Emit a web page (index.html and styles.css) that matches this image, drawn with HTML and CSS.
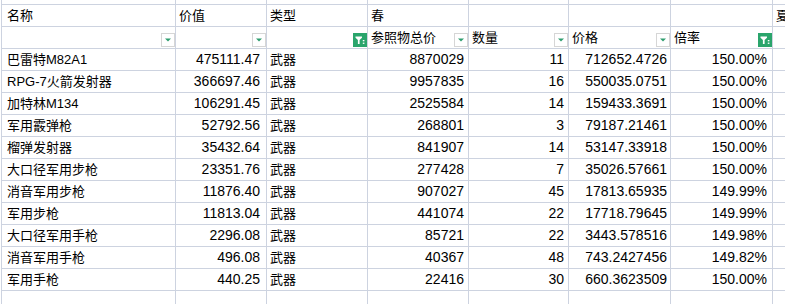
FILE: index.html
```html
<!DOCTYPE html>
<html lang="zh-CN">
<head>
<meta charset="utf-8">
<title>武器价格表</title>
<link rel="stylesheet" href="styles.css">
</head>
<body>
<div class="sheet" role="grid">
  <div class="row row-top" role="row">
    <div class="cell"></div><div class="cell"></div><div class="cell"></div><div class="cell"></div><div class="cell"></div><div class="cell"></div><div class="cell"></div><div class="cell"></div>
  </div>
  <div class="row" role="row">
    <div class="cell c1">名称</div>
    <div class="cell">价值</div>
    <div class="cell">类型</div>
    <div class="cell">春</div>
    <div class="cell"></div>
    <div class="cell"></div>
    <div class="cell"></div>
    <div class="cell">夏</div>
  </div>
  <div class="row" role="row">
    <div class="cell fcell c1"><span></span><span class="fbtn"><svg viewBox="0 0 14 14" width="14" height="14"><polygon points="4,5.5 10,5.5 7,8.5" class="tri"/></svg></span></div>
    <div class="cell fcell"><span></span><span class="fbtn"><svg viewBox="0 0 14 14" width="14" height="14"><polygon points="4,5.5 10,5.5 7,8.5" class="tri"/></svg></span></div>
    <div class="cell fcell"><span></span><span class="fbtn on"><svg viewBox="0 0 14 14" width="14" height="14"><path d="M2.5 3.5 H9 V4.8 L6.6 7 V11 H4.9 V7 L2.5 4.8 Z" class="fun"/><rect x="9.8" y="7" width="1.6" height="1.3" class="fun"/><rect x="9.8" y="9.6" width="1.6" height="1.3" class="fun"/></svg></span></div>
    <div class="cell fcell"><span>参照物总价</span><span class="fbtn"><svg viewBox="0 0 14 14" width="14" height="14"><polygon points="4,5.5 10,5.5 7,8.5" class="tri"/></svg></span></div>
    <div class="cell fcell"><span>数量</span><span class="fbtn"><svg viewBox="0 0 14 14" width="14" height="14"><polygon points="4,5.5 10,5.5 7,8.5" class="tri"/></svg></span></div>
    <div class="cell fcell"><span>价格</span><span class="fbtn"><svg viewBox="0 0 14 14" width="14" height="14"><polygon points="4,5.5 10,5.5 7,8.5" class="tri"/></svg></span></div>
    <div class="cell fcell"><span>倍率</span><span class="fbtn on"><svg viewBox="0 0 14 14" width="14" height="14"><path d="M2.5 3.5 H9 V4.8 L6.6 7 V11 H4.9 V7 L2.5 4.8 Z" class="fun"/><rect x="9.8" y="7" width="1.6" height="1.3" class="fun"/><rect x="9.8" y="9.6" width="1.6" height="1.3" class="fun"/></svg></span></div>
    <div class="cell"></div>
  </div>
  <div class="row" role="row"><div class="cell c1">巴雷特M82A1</div><div class="cell num c2">475111.47</div><div class="cell">武器</div><div class="cell num">8870029</div><div class="cell num">11</div><div class="cell num c6">712652.4726</div><div class="cell num c7">150.00%</div><div class="cell"></div></div>
  <div class="row" role="row"><div class="cell c1">RPG-7火箭发射器</div><div class="cell num c2">366697.46</div><div class="cell">武器</div><div class="cell num">9957835</div><div class="cell num">16</div><div class="cell num c6">550035.0751</div><div class="cell num c7">150.00%</div><div class="cell"></div></div>
  <div class="row" role="row"><div class="cell c1">加特林M134</div><div class="cell num c2">106291.45</div><div class="cell">武器</div><div class="cell num">2525584</div><div class="cell num">14</div><div class="cell num c6">159433.3691</div><div class="cell num c7">150.00%</div><div class="cell"></div></div>
  <div class="row" role="row"><div class="cell c1">军用霰弹枪</div><div class="cell num c2">52792.56</div><div class="cell">武器</div><div class="cell num">268801</div><div class="cell num">3</div><div class="cell num c6">79187.21461</div><div class="cell num c7">150.00%</div><div class="cell"></div></div>
  <div class="row" role="row"><div class="cell c1">榴弹发射器</div><div class="cell num c2">35432.64</div><div class="cell">武器</div><div class="cell num">841907</div><div class="cell num">14</div><div class="cell num c6">53147.33918</div><div class="cell num c7">150.00%</div><div class="cell"></div></div>
  <div class="row" role="row"><div class="cell c1">大口径军用步枪</div><div class="cell num c2">23351.76</div><div class="cell">武器</div><div class="cell num">277428</div><div class="cell num">7</div><div class="cell num c6">35026.57661</div><div class="cell num c7">150.00%</div><div class="cell"></div></div>
  <div class="row" role="row"><div class="cell c1">消音军用步枪</div><div class="cell num c2">11876.40</div><div class="cell">武器</div><div class="cell num">907027</div><div class="cell num">45</div><div class="cell num c6">17813.65935</div><div class="cell num c7">149.99%</div><div class="cell"></div></div>
  <div class="row" role="row"><div class="cell c1">军用步枪</div><div class="cell num c2">11813.04</div><div class="cell">武器</div><div class="cell num">441074</div><div class="cell num">22</div><div class="cell num c6">17718.79645</div><div class="cell num c7">149.99%</div><div class="cell"></div></div>
  <div class="row" role="row"><div class="cell c1">大口径军用手枪</div><div class="cell num c2">2296.08</div><div class="cell">武器</div><div class="cell num">85721</div><div class="cell num">22</div><div class="cell num c6">3443.578516</div><div class="cell num c7">149.98%</div><div class="cell"></div></div>
  <div class="row" role="row"><div class="cell c1">消音军用手枪</div><div class="cell num c2">496.08</div><div class="cell">武器</div><div class="cell num">40367</div><div class="cell num">48</div><div class="cell num c6">743.2427456</div><div class="cell num c7">149.82%</div><div class="cell"></div></div>
  <div class="row" role="row"><div class="cell c1">军用手枪</div><div class="cell num c2">440.25</div><div class="cell">武器</div><div class="cell num">22416</div><div class="cell num">30</div><div class="cell num c6">660.3623509</div><div class="cell num c7">150.00%</div><div class="cell"></div></div>
  <div class="row" role="row">
    <div class="cell"></div><div class="cell"></div><div class="cell"></div><div class="cell"></div><div class="cell"></div><div class="cell"></div><div class="cell"></div><div class="cell"></div>
  </div>
</div>
</body>
</html>
```
FILE: styles.css
```css
* {
  box-sizing: border-box;
}

html, body {
  margin: 0;
  background: #ffffff;
  overflow: hidden;
}

body {
  font-family: "Liberation Sans", "Noto Sans CJK SC", sans-serif;
  font-size: 13px;
  color: #000000;
}

.sheet {
  margin-left: 1px;
  border-left: 1px solid #cdd3e0;
  width: 880px;
}

.row {
  display: grid;
  grid-template-columns: 174px 91px 101px 101px 100px 102px 102px 100px;
  height: 22px;
}

.row-top {
  height: 5px;
}

.cell {
  border-right: 1px solid #cdd3e0;
  border-bottom: 1px solid #cdd3e0;
  padding: 0 4px 0 3px;
  line-height: 21px;
  white-space: nowrap;
  overflow: hidden;
}

.c1 {
  padding-left: 5px;
}

.num {
  text-align: right;
  font-size: 14px;
}

.c2 {
  padding-right: 6px;
}

.c6 {
  padding-right: 3px;
}

.c7 {
  padding-right: 5px;
}

.fcell {
  display: flex;
  justify-content: space-between;
  align-items: center;
  padding-right: 0;
}

.fbtn {
  align-self: flex-end;
  width: 14px;
  height: 14px;
  margin-bottom: 1px;
  background: #ffffff;
  border: 1px solid #d6d6d6;
  display: flex;
  flex: none;
}

.fbtn svg {
  display: block;
  margin: -1px;
}

.fbtn.on {
  background: #2aa56c;
  border-color: #2aa56c;
}

.tri {
  fill: #2f9e6f;
}

.fun {
  fill: #ffffff;
}
```
